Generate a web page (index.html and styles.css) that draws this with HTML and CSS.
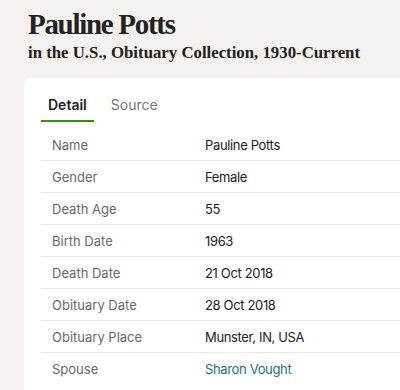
FILE: index.html
```html
<!DOCTYPE html>
<html lang="en">
<head>
  <meta charset="UTF-8" />
  <meta name="viewport" content="width=device-width, initial-scale=1.0" />
  <title>Pauline Potts - Obituary Collection</title>
  <link rel="stylesheet" href="styles.css">
</head>
<body>
  <header class="record-header">
    <h1>Pauline Potts</h1>
    <h2>in the U.S., Obituary Collection, 1930-Current</h2>
  </header>

  <section class="card">
    <nav class="tabs">
      <a href="#" class="tab active">Detail</a>
      <a href="#" class="tab">Source</a>
    </nav>

    <table class="facts">
      <tr><th>Name</th><td>Pauline Potts</td></tr>
      <tr><th>Gender</th><td>Female</td></tr>
      <tr><th>Death Age</th><td>55</td></tr>
      <tr><th>Birth Date</th><td>1963</td></tr>
      <tr><th>Death Date</th><td>21 Oct 2018</td></tr>
      <tr><th>Obituary Date</th><td>28 Oct 2018</td></tr>
      <tr><th>Obituary Place</th><td>Munster, IN, USA</td></tr>
      <tr><th>Spouse</th><td><a href="#" class="person-link">Sharon Vought</a></td></tr>
    </table>
  </section>
</body>
</html>
```

FILE: styles.css
```css
:root {
  --bg: #f4f1ee;
  --ink: #222222;
  --muted: #686868;
  --rule: #e6e6e6;
  --green: #3b8a12;
  --link: #1d6e92;
}

body {
  margin: 0;
  background: var(--bg);
  color: var(--ink);
  font-family: Inter, "Liberation Sans", sans-serif;
  overflow: hidden;
}

/* Record title */
.record-header {
  padding: 6px 0 0 28px;
}

.record-header h1 {
  margin: 0;
  font-family: "Liberation Serif", "Times New Roman", serif;
  font-size: 29px;
  font-weight: 700;
  letter-spacing: -1.3px;
  line-height: 36px;
  color: #222;
}

.record-header h2 {
  margin: 0;
  font-family: "Liberation Serif", "Times New Roman", serif;
  font-size: 16.8px;
  font-weight: 700;
  line-height: 22px;
  color: #222;
}

/* White record card */
.card {
  margin: 14px 0 0 24px;
  width: 420px;
  background: #fff;
  border-radius: 6px 0 0 0;
  padding: 17px 0 24px 17px;
}

.tabs {
  display: flex;
  gap: 10px;
}

.tab {
  padding: 1px 7px 6px;
  font-size: 14px;
  line-height: 18px;
  color: #777;
  text-decoration: none;
  border-bottom: 2px solid transparent;
}

.tab.active {
  color: var(--ink);
  font-weight: 600;
  border-bottom-color: var(--green);
}

/* Facts table */
.facts {
  margin-top: 7px;
  width: 100%;
  border-collapse: collapse;
  font-size: 13px;
}

.facts tr {
  border-bottom: 1px solid var(--rule);
}

.facts tr:last-child {
  border-bottom: none;
}

.facts th,
.facts td {
  height: 31px;
  padding: 0;
  text-align: left;
  vertical-align: middle;
}

.facts th {
  width: 153px;
  padding-left: 11px;
  font-weight: 400;
  color: var(--muted);
}

.facts td {
  letter-spacing: -0.35px;
}

.person-link {
  color: var(--link);
  text-decoration: none;
}
```
